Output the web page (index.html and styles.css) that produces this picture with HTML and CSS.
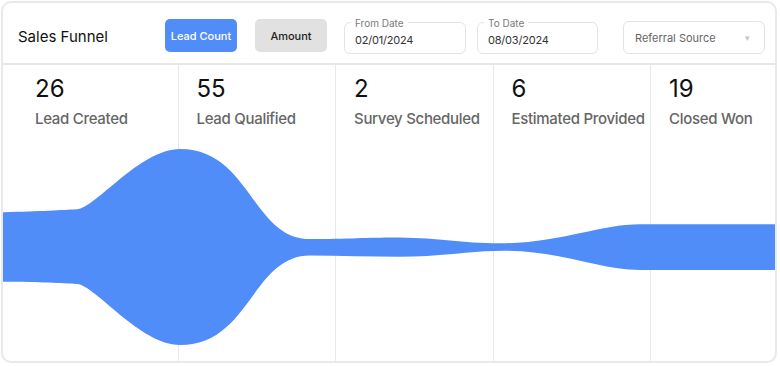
FILE: index.html
```html
<!DOCTYPE html>
<html lang="en">
<head>
  <meta charset="UTF-8">
  <meta name="viewport" content="width=device-width, initial-scale=1.0">
  <title>Sales Funnel</title>
  <link rel="stylesheet" href="styles.css">
</head>
<body>
  <div class="card">
    <header class="toolbar">
      <h2 class="title">Sales Funnel</h2>
      <button class="toggle active">Lead Count</button>
      <button class="toggle">Amount</button>
      <div class="field date from">
        <span class="field-label">From Date</span>
        <span class="field-value">02/01/2024</span>
      </div>
      <div class="field date to">
        <span class="field-label">To Date</span>
        <span class="field-value">08/03/2024</span>
      </div>
      <div class="field select">
        <span class="field-value muted">Referral Source</span>
        <span class="caret">&#9662;</span>
      </div>
    </header>

    <section class="funnel">
      <div class="stages">
        <div class="stage">
          <div class="stage-count">26</div>
          <div class="stage-name">Lead Created</div>
        </div>
        <div class="stage">
          <div class="stage-count">55</div>
          <div class="stage-name">Lead Qualified</div>
        </div>
        <div class="stage">
          <div class="stage-count">2</div>
          <div class="stage-name">Survey Scheduled</div>
        </div>
        <div class="stage">
          <div class="stage-count">6</div>
          <div class="stage-name">Estimated Provided</div>
        </div>
        <div class="stage">
          <div class="stage-count">19</div>
          <div class="stage-name">Closed Won</div>
        </div>
      </div>

      <!-- flow drawn in page coordinates -->
      <svg class="flow" viewBox="3 65 772 296" width="772" height="296">
        <path d="M0 212.3 C40 211.5 62 210 77 209.3 C95 208.5 140 149 180 149 C250 149 252 239 310 239 C350 239 370 237.3 400 237.5 C440 238 460 243.3 500 243.3 C560 243.3 600 224.3 640 224.3 L790 224.3 L790 270 L640 270 C600 270 560 250.7 505 250.7 C470 250.7 440 256.8 400 256.8 C370 256.8 340 255.5 310 255.5 C252 255.5 250 345 180 345 C140 345 95 285 77 284 C62 283 40 282 0 281.7 Z" />
      </svg>
    </section>
  </div>
</body>
</html>
```

FILE: styles.css
```css
body {
  margin: 0;
  padding: 1px;
  background: #fff;
  font-family: Inter, "Noto Sans", sans-serif;
  color: #111;
}
.card {
  width: 776px;
  height: 362px;
  box-sizing: border-box;
  border: 2px solid #e9e9e9;
  border-radius: 10px;
  overflow: hidden;
  display: flex;
  flex-direction: column;
}

.toolbar {
  display: flex;
  align-items: center;
  flex: none;
  padding: 5px 0 0 15px;
  box-sizing: border-box;
  height: 62px;
  border-bottom: 2px solid #e8e8e8;
}
.title {
  flex: none;
  width: 147px;
  margin: 3px 0 0;
  font-size: 15px;
  line-height: 20px;
  font-weight: 400;
  color: #111;
}
.toggle {
  width: 72px;
  height: 33px;
  border: none;
  border-radius: 5px;
  background: #e1e1e1;
  color: #222;
  font-family: inherit;
  font-size: 11px;
  font-weight: 500;
  padding: 0;
}
.toggle + .toggle { margin-left: 18px; }
.toggle.active { background: #518df9; color: #fff; }

.field {
  position: relative;
  box-sizing: border-box;
  border: 1px solid #e3e3e3;
  border-radius: 6px;
  background: #fff;
}
.date {
  width: 122px;
  height: 32px;
  padding: 10px 10px 0;
  margin-top: 5px;
}
.date.from { margin-left: 17px; }
.date.to { margin-left: 11px; width: 121px; }
.field-label {
  position: absolute;
  top: -6px;
  left: 6px;
  padding: 0 4px;
  background: #fff;
  font-size: 10px;
  line-height: 12px;
  color: #7a7a7a;
}
.field-value {
  display: block;
  font-size: 11px;
  line-height: 14px;
  letter-spacing: -0.2px;
  color: #333;
}
.select {
  width: 142px;
  height: 33px;
  margin: 4px 0 0 25px;
  padding: 0 14px 0 11px;
  display: flex;
  align-items: center;
  justify-content: space-between;
}
.field-value.muted { color: #666; letter-spacing: 0; }
.caret { font-size: 9px; color: #c4c4c4; }

.funnel {
  position: relative;
  flex: 1;
}
.stages {
  display: grid;
  grid-template-columns: 174.5px repeat(4, 157.5px);
  height: 100%;
}
.stage {
  padding: 10px 0 0 18px;
  border-left: 1px solid #e8e8e8;
}
.stage:first-child {
  padding-left: 32px;
  border-left: none;
}
.stage-count {
  font-size: 24px;
  line-height: 28px;
  color: #111;
}
.stage-name {
  margin-top: 6px;
  font-size: 15px;
  line-height: 20px;
  font-weight: 500;
  letter-spacing: -0.3px;
  color: #666;
  white-space: nowrap;
}
.flow {
  position: absolute;
  left: 0;
  top: 0;
}
.flow path { fill: #518df9; }
```
